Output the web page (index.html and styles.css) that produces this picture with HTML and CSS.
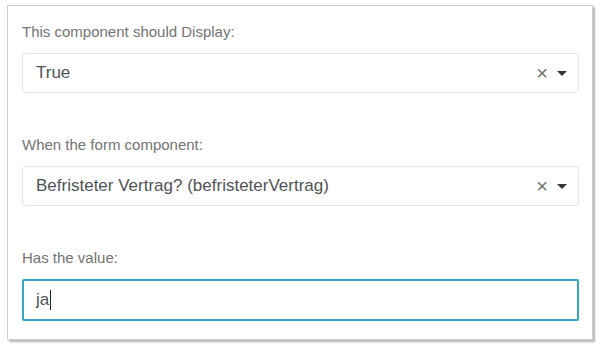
FILE: index.html
```html
<!DOCTYPE html>
<html>
<head>
<meta charset="utf-8">
<link rel="stylesheet" href="styles.css">
</head>
<body>
<div class="panel">
  <div class="field">
    <div class="label">This component should Display:</div>
    <div class="select">
      <span class="value">True</span>
      <span class="controls"><span class="clear">×</span><span class="caret"></span></span>
    </div>
  </div>
  <div class="field">
    <div class="label">When the form component:</div>
    <div class="select">
      <span class="value">Befristeter Vertrag? (befristeterVertrag)</span>
      <span class="controls"><span class="clear">×</span><span class="caret"></span></span>
    </div>
  </div>
  <div class="field">
    <div class="label">Has the value:</div>
    <div class="input"><span class="value">ja</span><span class="cursor"></span></div>
  </div>
</div>
</body>
</html>
```
FILE: styles.css
```css
html, body {
  margin: 0;
  padding: 0;
  background: #ffffff;
}
body {
  font-family: "Liberation Sans", Arial, sans-serif;
  width: 600px;
  height: 348px;
  overflow: hidden;
}
.panel {
  margin: 5px 0 0 7px;
  width: 586px;
  height: 335px;
  border: 1px solid #d0d0d0;
  box-shadow: 2px 2px 2px rgba(0, 0, 0, 0.3);
  padding: 16px 13px 0 14px;
  box-sizing: border-box;
  display: flex;
  flex-direction: column;
  gap: 42px;
}
.field {
  display: flex;
  flex-direction: column;
  gap: 11px;
}
.label {
  font-size: 15px;
  line-height: 20px;
  color: #737373;
}
.select {
  height: 40px;
  box-sizing: border-box;
  border: 1px solid #e2e4e7;
  border-radius: 4px;
  display: flex;
  align-items: center;
  padding: 0 11px 0 13px;
}
.value {
  flex: 1;
  font-size: 17px;
  color: #505357;
}
.controls {
  display: flex;
  align-items: center;
  gap: 9px;
}
.clear {
  font-size: 20px;
  color: #707070;
  line-height: 20px;
}
.caret {
  width: 0;
  height: 0;
  border-left: 5.5px solid transparent;
  border-right: 5.5px solid transparent;
  border-top: 5px solid #333;
}
.input {
  height: 42px;
  box-sizing: border-box;
  border: 2px solid #35a6c4;
  border-radius: 2px;
  box-shadow: 0 0 1px rgba(53, 166, 196, 0.6);
  display: flex;
  align-items: center;
  padding: 0 12px;
}
.input .value {
  flex: none;
}
.cursor {
  width: 1px;
  height: 20px;
  background: #222;
  margin-left: 1px;
}
```
